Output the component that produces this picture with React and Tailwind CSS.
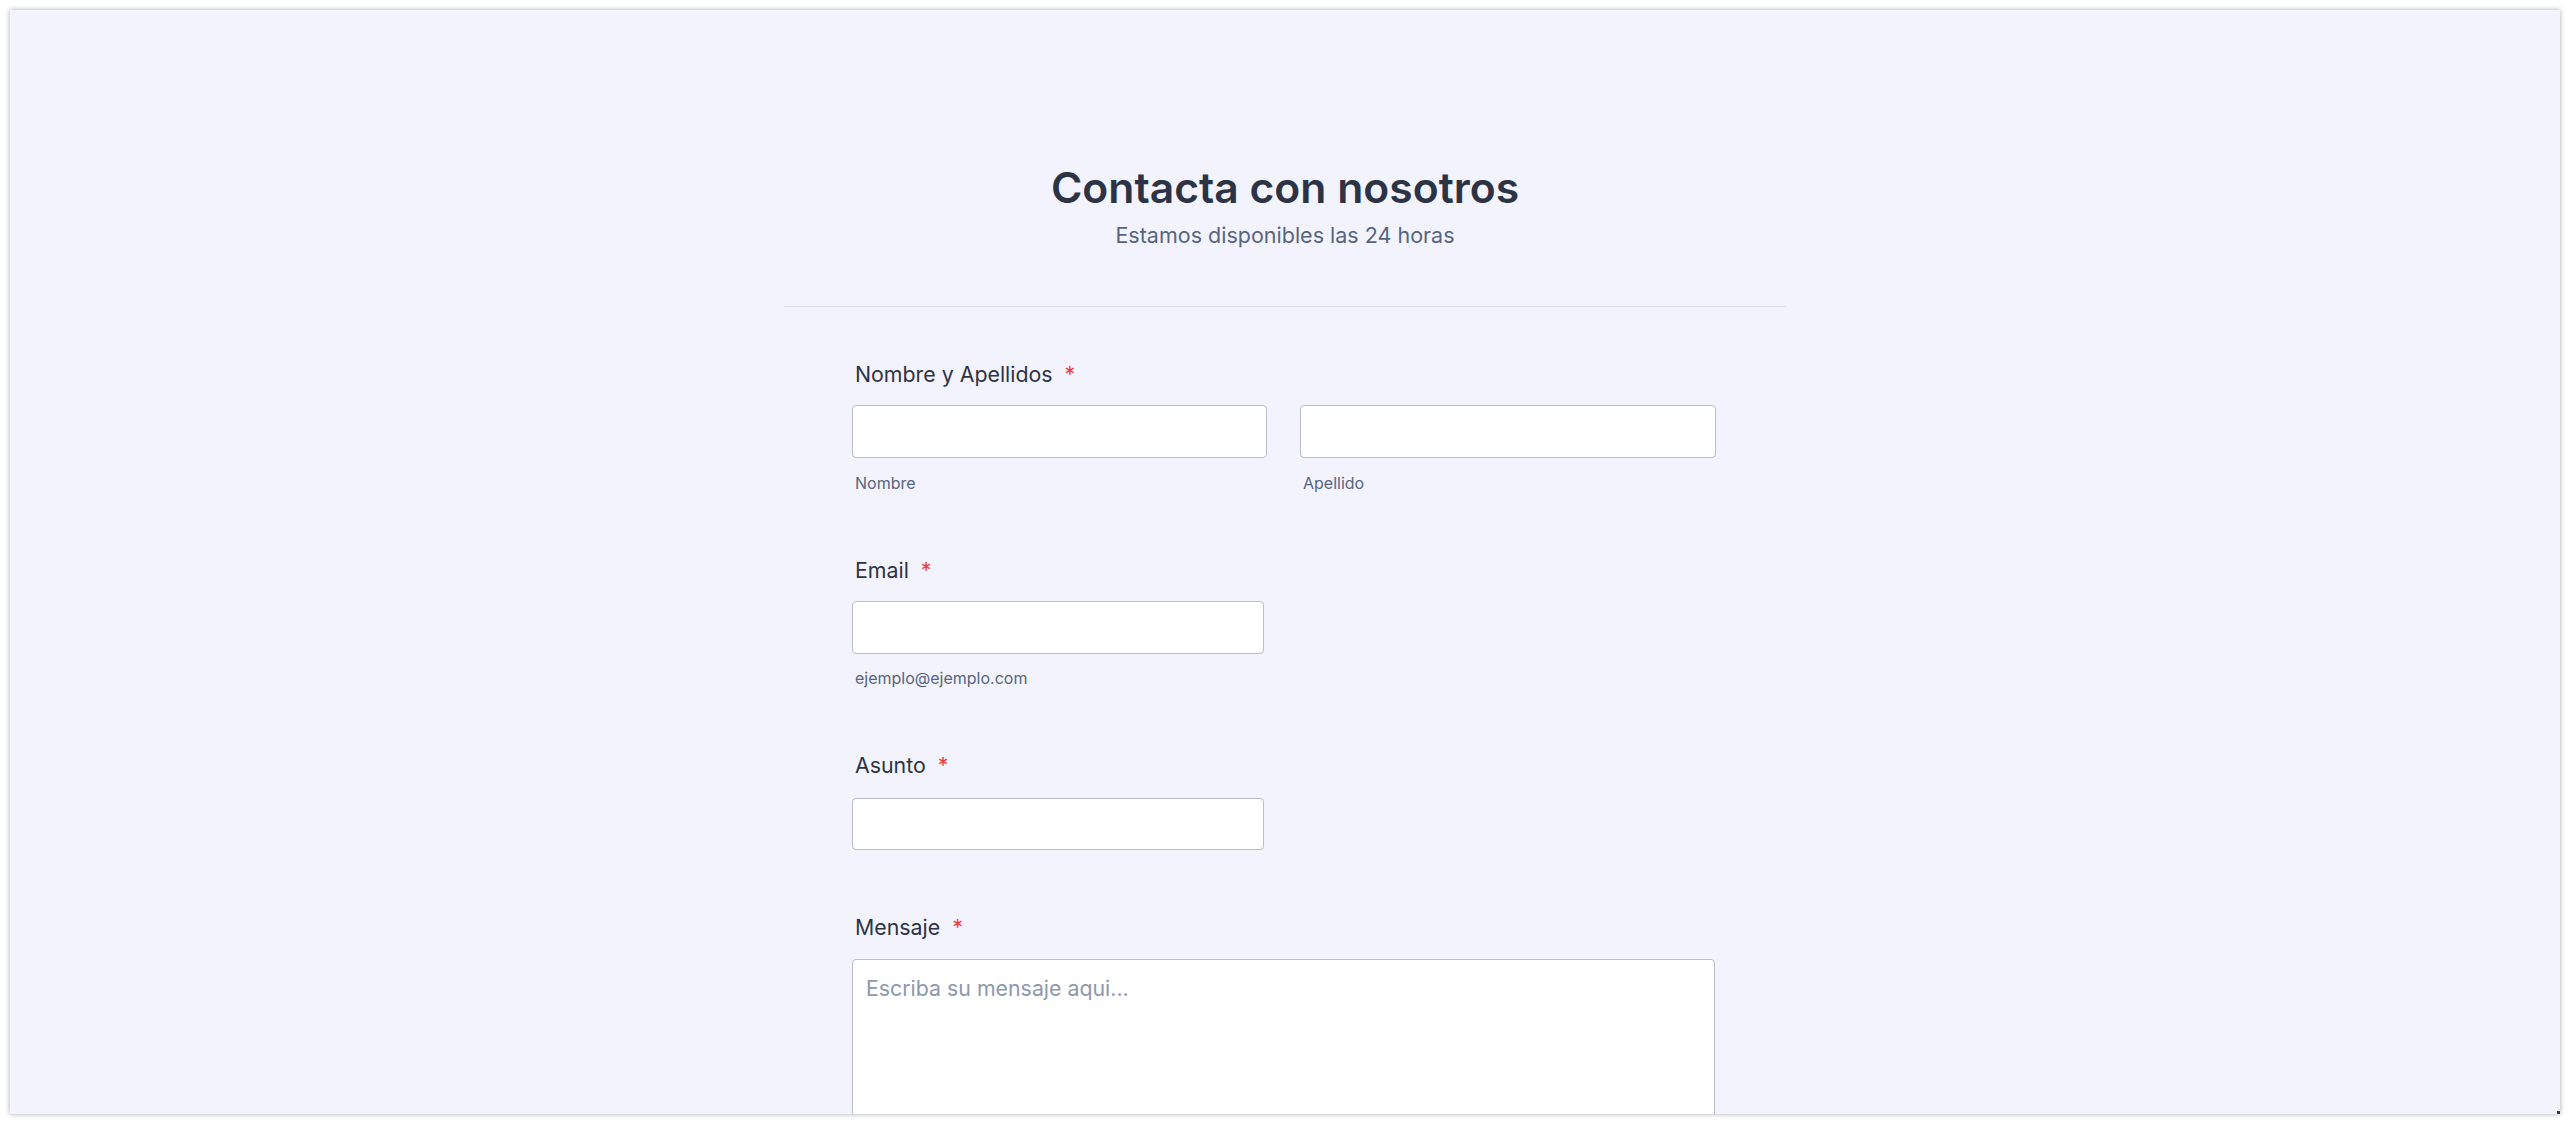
export default function App() {
  const font = { fontFamily: "Inter, 'Noto Sans', sans-serif" };
  const labelCls = "block text-[21.33px] leading-[32px] font-normal text-[#2c3345] pl-[3px]";
  return (
    <div className="w-[2570px] h-[1124px] bg-white p-[10px]" style={font}>
      <div className="relative h-[1104px] bg-[#f3f3fe] overflow-hidden shadow-[0_0_5px_rgba(0,0,0,0.35)]">
        <div className="w-[1002px] mx-auto">
          <div className="pt-[152px] pb-[55px] border-b border-[#dcdee8] text-center">
            <h1 className="text-[42.67px] leading-[51px] font-semibold text-[#2c3345]">Contacta con nosotros</h1>
            <p className="mt-[6px] text-[21.5px] leading-[32px] text-[#57647e]">Estamos disponibles las 24 horas</p>
          </div>
          <div className="pl-[68px] pr-[70px]">
            {/* Nombre */}
            <div className="pt-[51px]">
              <label className={labelCls}>
                Nombre y Apellidos<span className="ml-[12px] text-[#f23a3c]">*</span>
              </label>
              <div className="mt-[15px] flex gap-[33px]">
                <div className="w-[415px]">
                  <div className="h-[53px] bg-white border border-[#b8bdc9] rounded-[4px]"></div>
                  <div className="mt-[13px] pl-[3px] text-[16px] leading-[24px] text-[#57647e]">Nombre</div>
                </div>
                <div className="w-[416px]">
                  <div className="h-[53px] bg-white border border-[#b8bdc9] rounded-[4px]"></div>
                  <div className="mt-[13px] pl-[3px] text-[16px] leading-[24px] text-[#57647e]">Apellido</div>
                </div>
              </div>
            </div>
            {/* Email */}
            <div className="pt-[59px]">
              <label className={labelCls}>
                Email<span className="ml-[12px] text-[#f23a3c]">*</span>
              </label>
              <div className="mt-[15px] w-[412px]">
                <div className="h-[53px] bg-white border border-[#b8bdc9] rounded-[4px]"></div>
                <div className="mt-[12px] pl-[3px] text-[16px] leading-[24px] text-[#57647e]">ejemplo@ejemplo.com</div>
              </div>
            </div>
            {/* Asunto */}
            <div className="pt-[59px]">
              <label className={labelCls}>
                Asunto<span className="ml-[12px] text-[#f23a3c]">*</span>
              </label>
              <div className="mt-[17px] w-[412px]">
                <div className="h-[52px] bg-white border border-[#b8bdc9] rounded-[4px]"></div>
              </div>
            </div>
            {/* Mensaje */}
            <div className="pt-[61px]">
              <label className={labelCls}>
                Mensaje<span className="ml-[12px] text-[#f23a3c]">*</span>
              </label>
              <div className="mt-[16px] w-[863px]">
                <div className="h-[240px] bg-white border border-[#b8bdc9] rounded-[4px] px-[13px] pt-[12px] text-[21.33px] leading-[32px] text-[#8d98ad]">
                  Escriba su mensaje aqui...
                </div>
              </div>
            </div>
          </div>
        </div>
        <div className="absolute right-0 bottom-0 w-[3px] h-[3px] bg-[#333c4a]"></div>
      </div>
    </div>
  );
}
